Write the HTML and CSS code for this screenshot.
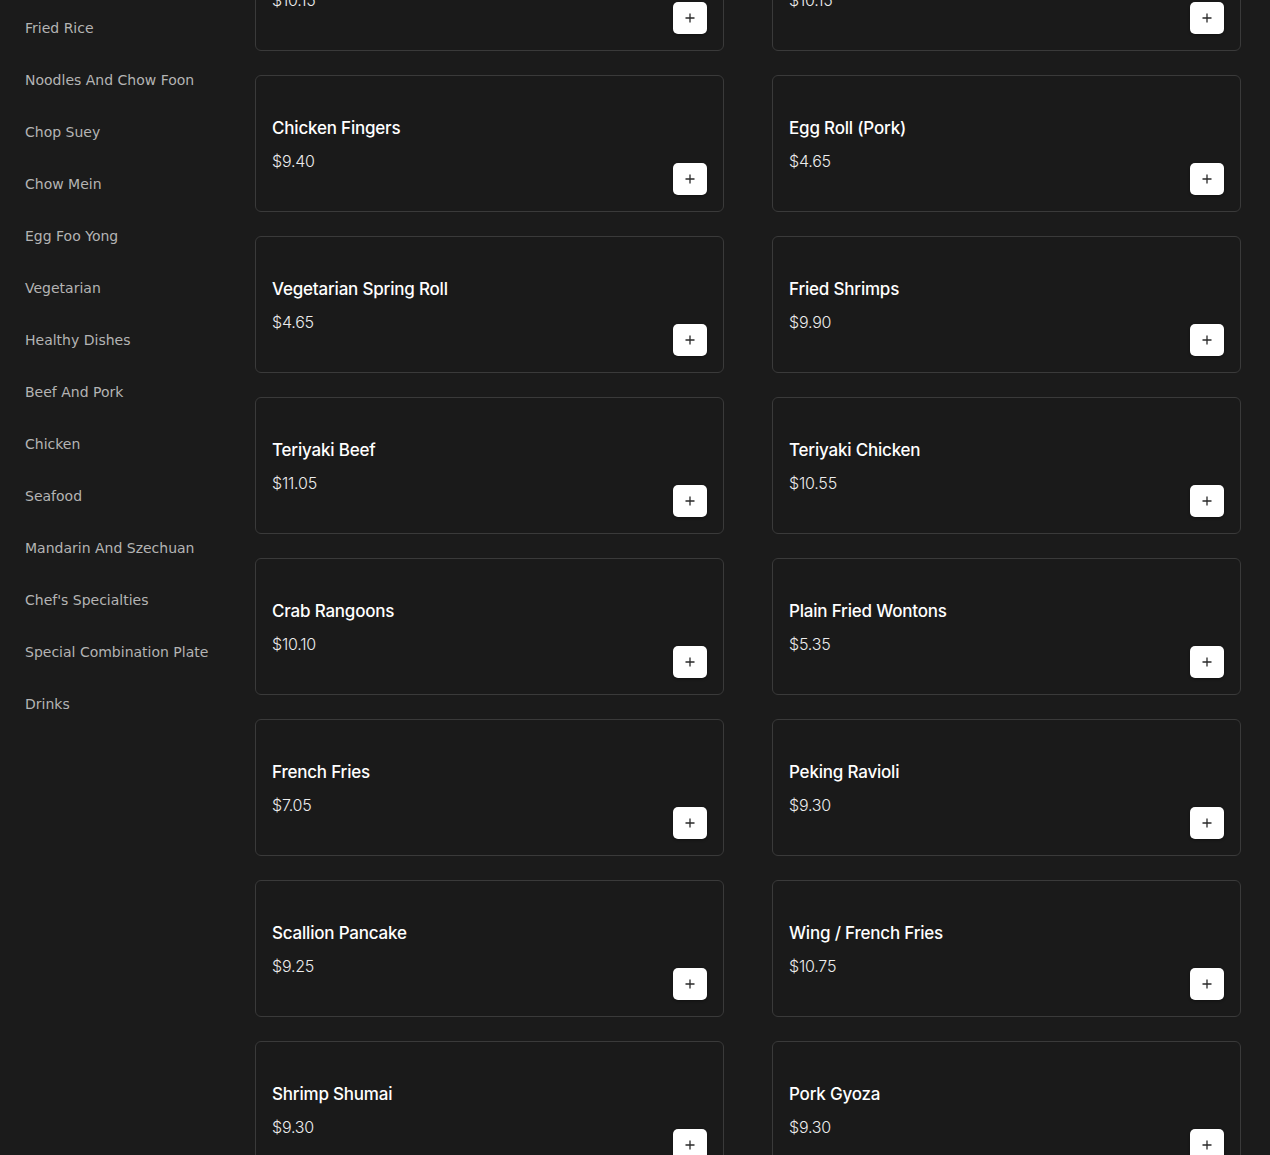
FILE: index.html
```html
<!DOCTYPE html>
<html lang="en">
<head>
<meta charset="utf-8">
<title>Menu</title>
<link rel="stylesheet" href="styles.css">
</head>
<body>
<div class="layout">
  <nav class="sidebar">
    <a class="cat">Fried Rice</a>
    <a class="cat">Noodles And Chow Foon</a>
    <a class="cat">Chop Suey</a>
    <a class="cat">Chow Mein</a>
    <a class="cat">Egg Foo Yong</a>
    <a class="cat">Vegetarian</a>
    <a class="cat">Healthy Dishes</a>
    <a class="cat">Beef And Pork</a>
    <a class="cat">Chicken</a>
    <a class="cat">Seafood</a>
    <a class="cat">Mandarin And Szechuan</a>
    <a class="cat">Chef's Specialties</a>
    <a class="cat">Special Combination Plate</a>
    <a class="cat">Drinks</a>
  </nav>
  <main class="main">
    <div class="grid">
      <div class="card"><div class="info"><div class="title">Boneless Spare Ribs</div><div class="price">$10.15</div></div><button class="add"><svg viewBox="0 0 12 12" width="12" height="12"><path d="M6 1.5v9M1.5 6h9" stroke="#2a2a2a" stroke-width="1.3" fill="none"/></svg></button></div>
      <div class="card"><div class="info"><div class="title">Bar-B-Q Spare Ribs</div><div class="price">$10.15</div></div><button class="add"><svg viewBox="0 0 12 12" width="12" height="12"><path d="M6 1.5v9M1.5 6h9" stroke="#2a2a2a" stroke-width="1.3" fill="none"/></svg></button></div>
      <div class="card"><div class="info"><div class="title">Chicken Fingers</div><div class="price">$9.40</div></div><button class="add"><svg viewBox="0 0 12 12" width="12" height="12"><path d="M6 1.5v9M1.5 6h9" stroke="#2a2a2a" stroke-width="1.3" fill="none"/></svg></button></div>
      <div class="card"><div class="info"><div class="title">Egg Roll (Pork)</div><div class="price">$4.65</div></div><button class="add"><svg viewBox="0 0 12 12" width="12" height="12"><path d="M6 1.5v9M1.5 6h9" stroke="#2a2a2a" stroke-width="1.3" fill="none"/></svg></button></div>
      <div class="card"><div class="info"><div class="title">Vegetarian Spring Roll</div><div class="price">$4.65</div></div><button class="add"><svg viewBox="0 0 12 12" width="12" height="12"><path d="M6 1.5v9M1.5 6h9" stroke="#2a2a2a" stroke-width="1.3" fill="none"/></svg></button></div>
      <div class="card"><div class="info"><div class="title">Fried Shrimps</div><div class="price">$9.90</div></div><button class="add"><svg viewBox="0 0 12 12" width="12" height="12"><path d="M6 1.5v9M1.5 6h9" stroke="#2a2a2a" stroke-width="1.3" fill="none"/></svg></button></div>
      <div class="card"><div class="info"><div class="title">Teriyaki Beef</div><div class="price">$11.05</div></div><button class="add"><svg viewBox="0 0 12 12" width="12" height="12"><path d="M6 1.5v9M1.5 6h9" stroke="#2a2a2a" stroke-width="1.3" fill="none"/></svg></button></div>
      <div class="card"><div class="info"><div class="title">Teriyaki Chicken</div><div class="price">$10.55</div></div><button class="add"><svg viewBox="0 0 12 12" width="12" height="12"><path d="M6 1.5v9M1.5 6h9" stroke="#2a2a2a" stroke-width="1.3" fill="none"/></svg></button></div>
      <div class="card"><div class="info"><div class="title">Crab Rangoons</div><div class="price">$10.10</div></div><button class="add"><svg viewBox="0 0 12 12" width="12" height="12"><path d="M6 1.5v9M1.5 6h9" stroke="#2a2a2a" stroke-width="1.3" fill="none"/></svg></button></div>
      <div class="card"><div class="info"><div class="title">Plain Fried Wontons</div><div class="price">$5.35</div></div><button class="add"><svg viewBox="0 0 12 12" width="12" height="12"><path d="M6 1.5v9M1.5 6h9" stroke="#2a2a2a" stroke-width="1.3" fill="none"/></svg></button></div>
      <div class="card"><div class="info"><div class="title">French Fries</div><div class="price">$7.05</div></div><button class="add"><svg viewBox="0 0 12 12" width="12" height="12"><path d="M6 1.5v9M1.5 6h9" stroke="#2a2a2a" stroke-width="1.3" fill="none"/></svg></button></div>
      <div class="card"><div class="info"><div class="title">Peking Ravioli</div><div class="price">$9.30</div></div><button class="add"><svg viewBox="0 0 12 12" width="12" height="12"><path d="M6 1.5v9M1.5 6h9" stroke="#2a2a2a" stroke-width="1.3" fill="none"/></svg></button></div>
      <div class="card"><div class="info"><div class="title">Scallion Pancake</div><div class="price">$9.25</div></div><button class="add"><svg viewBox="0 0 12 12" width="12" height="12"><path d="M6 1.5v9M1.5 6h9" stroke="#2a2a2a" stroke-width="1.3" fill="none"/></svg></button></div>
      <div class="card"><div class="info"><div class="title">Wing / French Fries</div><div class="price">$10.75</div></div><button class="add"><svg viewBox="0 0 12 12" width="12" height="12"><path d="M6 1.5v9M1.5 6h9" stroke="#2a2a2a" stroke-width="1.3" fill="none"/></svg></button></div>
      <div class="card"><div class="info"><div class="title">Shrimp Shumai</div><div class="price">$9.30</div></div><button class="add"><svg viewBox="0 0 12 12" width="12" height="12"><path d="M6 1.5v9M1.5 6h9" stroke="#2a2a2a" stroke-width="1.3" fill="none"/></svg></button></div>
      <div class="card"><div class="info"><div class="title">Pork Gyoza</div><div class="price">$9.30</div></div><button class="add"><svg viewBox="0 0 12 12" width="12" height="12"><path d="M6 1.5v9M1.5 6h9" stroke="#2a2a2a" stroke-width="1.3" fill="none"/></svg></button></div>
    </div>
  </main>
</div>
</body>
</html>
```

FILE: styles.css
```css
html, body {
  margin: 0;
  padding: 0;
  height: 100%;
  overflow: hidden;
  background: #1b1b1b;
}
.layout {
  display: flex;
  height: 100vh;
}
.sidebar {
  width: 230px;
  flex: none;
  padding: 2px 0 0 25px;
  display: flex;
  flex-direction: column;
}
.cat {
  font-family: "DejaVu Sans", sans-serif;
  font-size: 14px;
  line-height: 20px;
  padding: 16px 0;
  color: #b4b4b4;
  white-space: nowrap;
}
.main {
  flex: 1;
  overflow: hidden;
  padding-right: 29px;
}
.grid {
  margin-top: -86px;
  display: grid;
  grid-template-columns: 1fr 1fr;
  column-gap: 48px;
  row-gap: 24px;
}
.card {
  box-sizing: border-box;
  height: 137px;
  border: 1px solid #3a3a3a;
  border-radius: 6px;
  background: #1a1a1a;
  padding: 16px;
  display: flex;
  justify-content: space-between;
  align-items: flex-end;
}
.info {
  align-self: flex-start;
  padding-top: 24px;
}
.title {
  font-family: "Inter", sans-serif;
  font-size: 17px;
  font-weight: 500;
  line-height: 24px;
  color: #ffffff;
  letter-spacing: -0.2px;
}
.price {
  margin-top: 9px;
  font-family: "Inter", sans-serif;
  font-size: 16px;
  font-weight: 300;
  line-height: 24px;
  color: #ececec;
  letter-spacing: -0.2px;
}
.add {
  width: 34px;
  height: 32px;
  border: none;
  border-radius: 5px;
  background: #ffffff;
  display: flex;
  align-items: center;
  justify-content: center;
  padding: 0;
  box-shadow: 0 1px 3px rgba(0,0,0,0.4);
}
```
